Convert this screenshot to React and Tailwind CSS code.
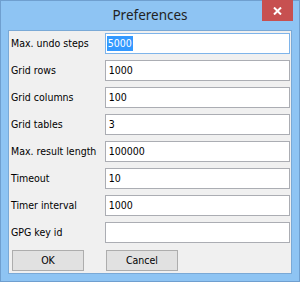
import React from "react";

const rows = [
  ["Max. undo steps", "5000"],
  ["Grid rows", "1000"],
  ["Grid columns", "100"],
  ["Grid tables", "3"],
  ["Max. result length", "100000"],
  ["Timeout", "10"],
  ["Timer interval", "1000"],
  ["GPG key id", ""],
];

export default function App() {
  return (
    <div className="w-[300px] h-[282px] border border-[#6f9fcf] bg-[#8ec4f3] flex flex-col">
      <div className="relative h-[29px] flex items-center justify-center">
        <span
          className="text-[13.5px] text-[#222] leading-none mt-[1px]"
          style={{ fontFamily: '"Noto Sans", "Open Sans", sans-serif' }}
        >
          Preferences
        </span>
        <div className="absolute right-[6px] -top-px w-[31px] h-[21px] bg-[#c75050] flex items-center justify-center">
          <svg width="9" height="8" viewBox="0 0 9 8">
            <path d="M1 0.5 L8 7.5 M8 0.5 L1 7.5" stroke="white" strokeWidth="2" />
          </svg>
        </div>
      </div>
      <div
        className="mx-[7px] h-[244px] border border-[#7aa9d6] bg-[#f0f0f0] flex flex-col pt-[2px] px-px gap-[6px]"
        style={{ fontFamily: '"DejaVu Sans Condensed", "DejaVu Sans", sans-serif' }}
      >
        {rows.map(([label, value], i) => (
          <div key={label} className="flex items-center h-[21px]">
            <div className="w-[95px] pl-px text-[10.5px] text-black">{label}</div>
            <div
              className={`w-[186px] h-[21px] bg-white border flex items-center pl-[1px] text-[10.5px] text-black ${
                i === 0 ? "border-[#7eb4ea]" : "border-[#abadb3]"
              }`}
            >
              {i === 0 ? (
                <span className="bg-[#3399ff] text-white px-[1px] leading-[15px]">{value}</span>
              ) : (
                <span className="px-[2px]">{value}</span>
              )}
            </div>
          </div>
        ))}
        <div className="flex mt-px pl-[2px] gap-[22px]">
          <div className="w-[72px] h-[21px] bg-[#e1e1e1] border border-[#adadad] flex items-center justify-center text-[10.5px] text-black">
            OK
          </div>
          <div className="w-[72px] h-[21px] bg-[#e1e1e1] border border-[#adadad] flex items-center justify-center text-[10.5px] text-black">
            Cancel
          </div>
        </div>
      </div>
    </div>
  );
}
